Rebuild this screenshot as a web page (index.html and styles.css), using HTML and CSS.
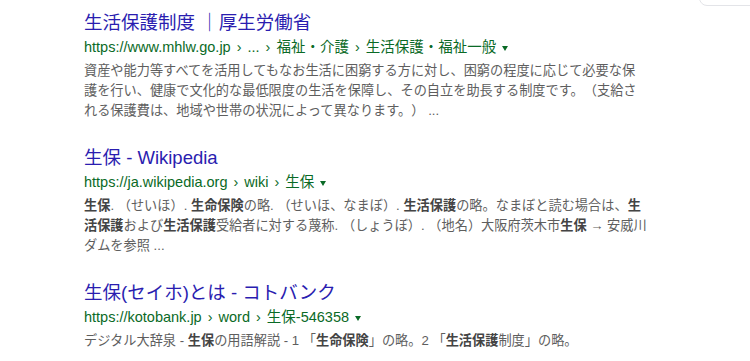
FILE: index.html
```html
<!DOCTYPE html>
<html lang="ja">
<head>
<meta charset="utf-8">
<title>生保 - 検索結果</title>
<link rel="stylesheet" href="styles.css">
</head>
<body>
<div class="corner-card"></div>
<main class="results">
  <div class="result">
    <h3 class="title"><a href="#">生活保護制度 ｜厚生労働省</a></h3>
    <div class="url">https://www.mhlw.go.jp<span class="sep">›</span>...<span class="sep">›</span>福祉・介護<span class="sep">›</span>生活保護・福祉一般<span class="caret"></span></div>
    <div class="snippet">資産や能力等すべてを活用してもなお生活に困窮する方に対し、困窮の程度に応じて必要な保護を行い、健康で文化的な最低限度の生活を保障し、その自立を助長する制度です。（支給される保護費は、地域や世帯の状況によって異なります。） ...</div>
  </div>
  <div class="result">
    <h3 class="title"><a href="#">生保 - Wikipedia</a></h3>
    <div class="url">https://ja.wikipedia.org<span class="sep">›</span>wiki<span class="sep">›</span>生保<span class="caret"></span></div>
    <div class="snippet"><b>生保</b>. （せいほ）. <b>生命保険</b>の略. （せいほ、なまぼ）. <b>生活保護</b>の略。なまぼと読む場合は、<b>生活保護</b>および<b>生活保護</b>受給者に対する蔑称. （しょうぼ）. （地名）大阪府茨木市<b>生保</b> → 安威川ダムを参照 ...</div>
  </div>
  <div class="result">
    <h3 class="title"><a href="#">生保(セイホ)とは - コトバンク</a></h3>
    <div class="url">https://kotobank.jp<span class="sep">›</span>word<span class="sep">›</span>生保-546358<span class="caret"></span></div>
    <div class="snippet">デジタル大辞泉 - <b>生保</b>の用語解説 - 1 「<b>生命保険</b>」の略。2 「<b>生活保護</b>制度」の略。</div>
  </div>
</main>
</body>
</html>
```

FILE: styles.css
```css
html, body {
  margin: 0;
  background: #ffffff;
}

body {
  font-family: "Liberation Sans", Arial, "Noto Sans CJK JP", sans-serif;
  overflow: hidden;
  position: relative;
  height: 361px;
}

.corner-card {
  position: absolute;
  top: -20px;
  left: 699px;
  width: 90px;
  height: 24px;
  border: 1px solid #e3e4e8;
  border-radius: 8px;
}

.results {
  padding: 11px 0 0 84px;
  width: 564px;
}

.result + .result {
  margin-top: 25px;
}

.title {
  margin: 0;
  font-size: 18.5px;
  line-height: 24px;
  font-weight: normal;
}

.title a {
  color: #2a1db0;
  text-decoration: none;
}

.url {
  font-size: 14.5px;
  line-height: 24px;
  color: #0a6a26;
  white-space: nowrap;
}

.sep {
  padding: 0 6px;
}

.caret {
  display: inline-block;
  width: 0;
  height: 0;
  margin-left: 6px;
  border-style: solid;
  border-width: 5px 3.5px 0 3.5px;
  border-color: #0a6a26 transparent transparent transparent;
  vertical-align: middle;
}

.snippet {
  margin-top: 2px;
  font-size: 13.2px;
  line-height: 20px;
  color: #5e5e5e;
  text-spacing-trim: space-all;
}

.snippet b {
  font-weight: bold;
  color: #444444;
}
```
